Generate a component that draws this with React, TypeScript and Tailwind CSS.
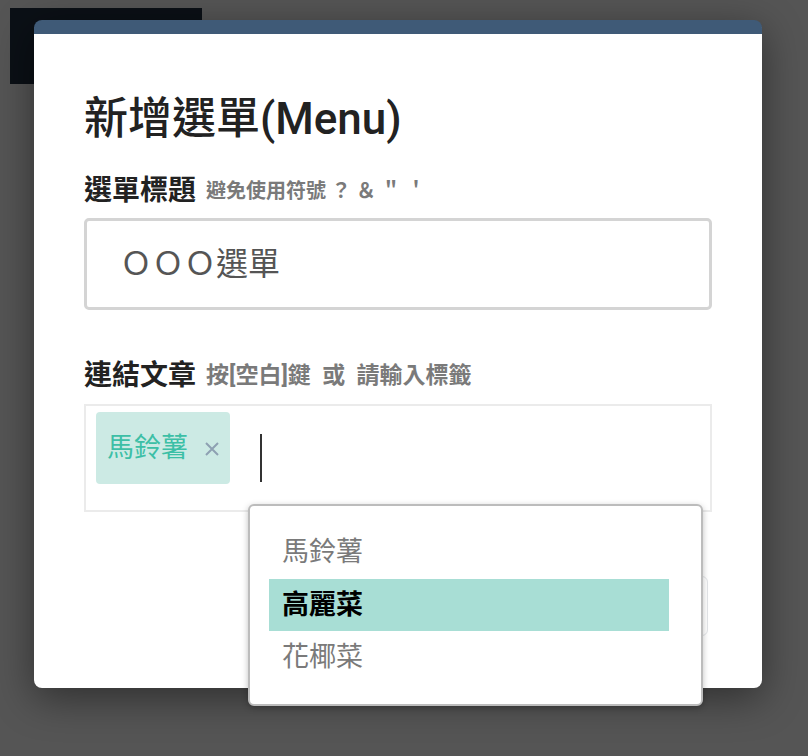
import React from "react";

const font = "font-['Roboto','Noto_Sans_CJK_TC',sans-serif]";

const options = [
  { label: "馬鈴薯", active: false },
  { label: "高麗菜", active: true },
  { label: "花椰菜", active: false },
];

function Dropdown() {
  return (
    <div className="absolute left-[162px] top-[98px] z-10 w-[455px] h-[202px] rounded-md border-2 border-[#bcbcbc] bg-white pt-[20px] px-[19px] shadow-[0_2px_6px_rgba(0,0,0,0.25)]">
      {options.map((o) => (
        <div
          key={o.label}
          className={
            o.active
              ? "h-[52px] w-[400px] flex items-center px-[13px] bg-[#a8ded5] text-[27px] font-bold text-black"
              : "h-[53px] flex items-center px-[13px] text-[27px] text-[#7a7a7a]"
          }
        >
          {o.label}
        </div>
      ))}
    </div>
  );
}

export default function App() {
  return (
    <div className={`relative w-[808px] h-[756px] overflow-hidden bg-[#555555] ${font}`}>
      {/* page behind the overlay */}
      <div className="absolute left-[10px] top-[8px] w-[192px] h-[76px] bg-[#0b1016]" />

      <div className="absolute left-[34px] top-[20px] w-[728px] h-[668px] rounded-lg border-t-[14px] border-[#3f5a77] bg-white shadow-[0_10px_40px_rgba(0,0,0,0.45)]">
        <div className="px-[50px] pt-[57px]">
          <h1 className="text-[44px] leading-[56px] font-medium text-[#222]">新增選單(Menu)</h1>

          <div className="mt-[26px] h-[36px] flex items-center gap-[10px]">
            <span className="text-[28px] font-bold text-[#222]">選單標題</span>
            <span className="text-[20px] font-bold text-[#7a7a7a] whitespace-pre">避免使用符號 ？ ＆ ＂ ＇</span>
          </div>
          <div className="mt-[9px] h-[92px] rounded-[5px] border-[3px] border-[#d4d4d4] flex items-center pl-[33px]">
            <span className="text-[32px] text-[#555]">ＯＯＯ選單</span>
          </div>

          <div className="mt-[48px] h-[36px] flex items-center gap-[10px]">
            <span className="text-[28px] font-bold text-[#222]">連結文章</span>
            <span className="text-[23px] font-bold text-[#7a7a7a] whitespace-pre">按[空白]鍵  或  請輸入標籤</span>
          </div>
          <div className="relative mt-[10px] h-[108px] border-2 border-[#ebebeb] pt-[6px] pl-[10px] flex items-start">
            <div className="h-[72px] w-[134px] rounded bg-[#cceae4] flex items-center pl-[11px] gap-[16px]">
              <span className="text-[27px] text-[#3cbfa6]">馬鈴薯</span>
              <svg width="16" height="16" viewBox="0 0 16 16" className="mt-[2px]">
                <path d="M2 2L14 14M14 2L2 14" stroke="#8ea1b2" strokeWidth="2" />
              </svg>
            </div>
            <div className="ml-[30px] mt-[22px] h-[48px] w-[2px] bg-[#333]" />
            <Dropdown />
          </div>

          <div className="mt-[64px] mr-[4px] flex justify-end">
            <div className="h-[60px] w-[150px] rounded-md border border-[#e3e5e8] bg-white" />
          </div>
        </div>
      </div>
    </div>
  );
}
